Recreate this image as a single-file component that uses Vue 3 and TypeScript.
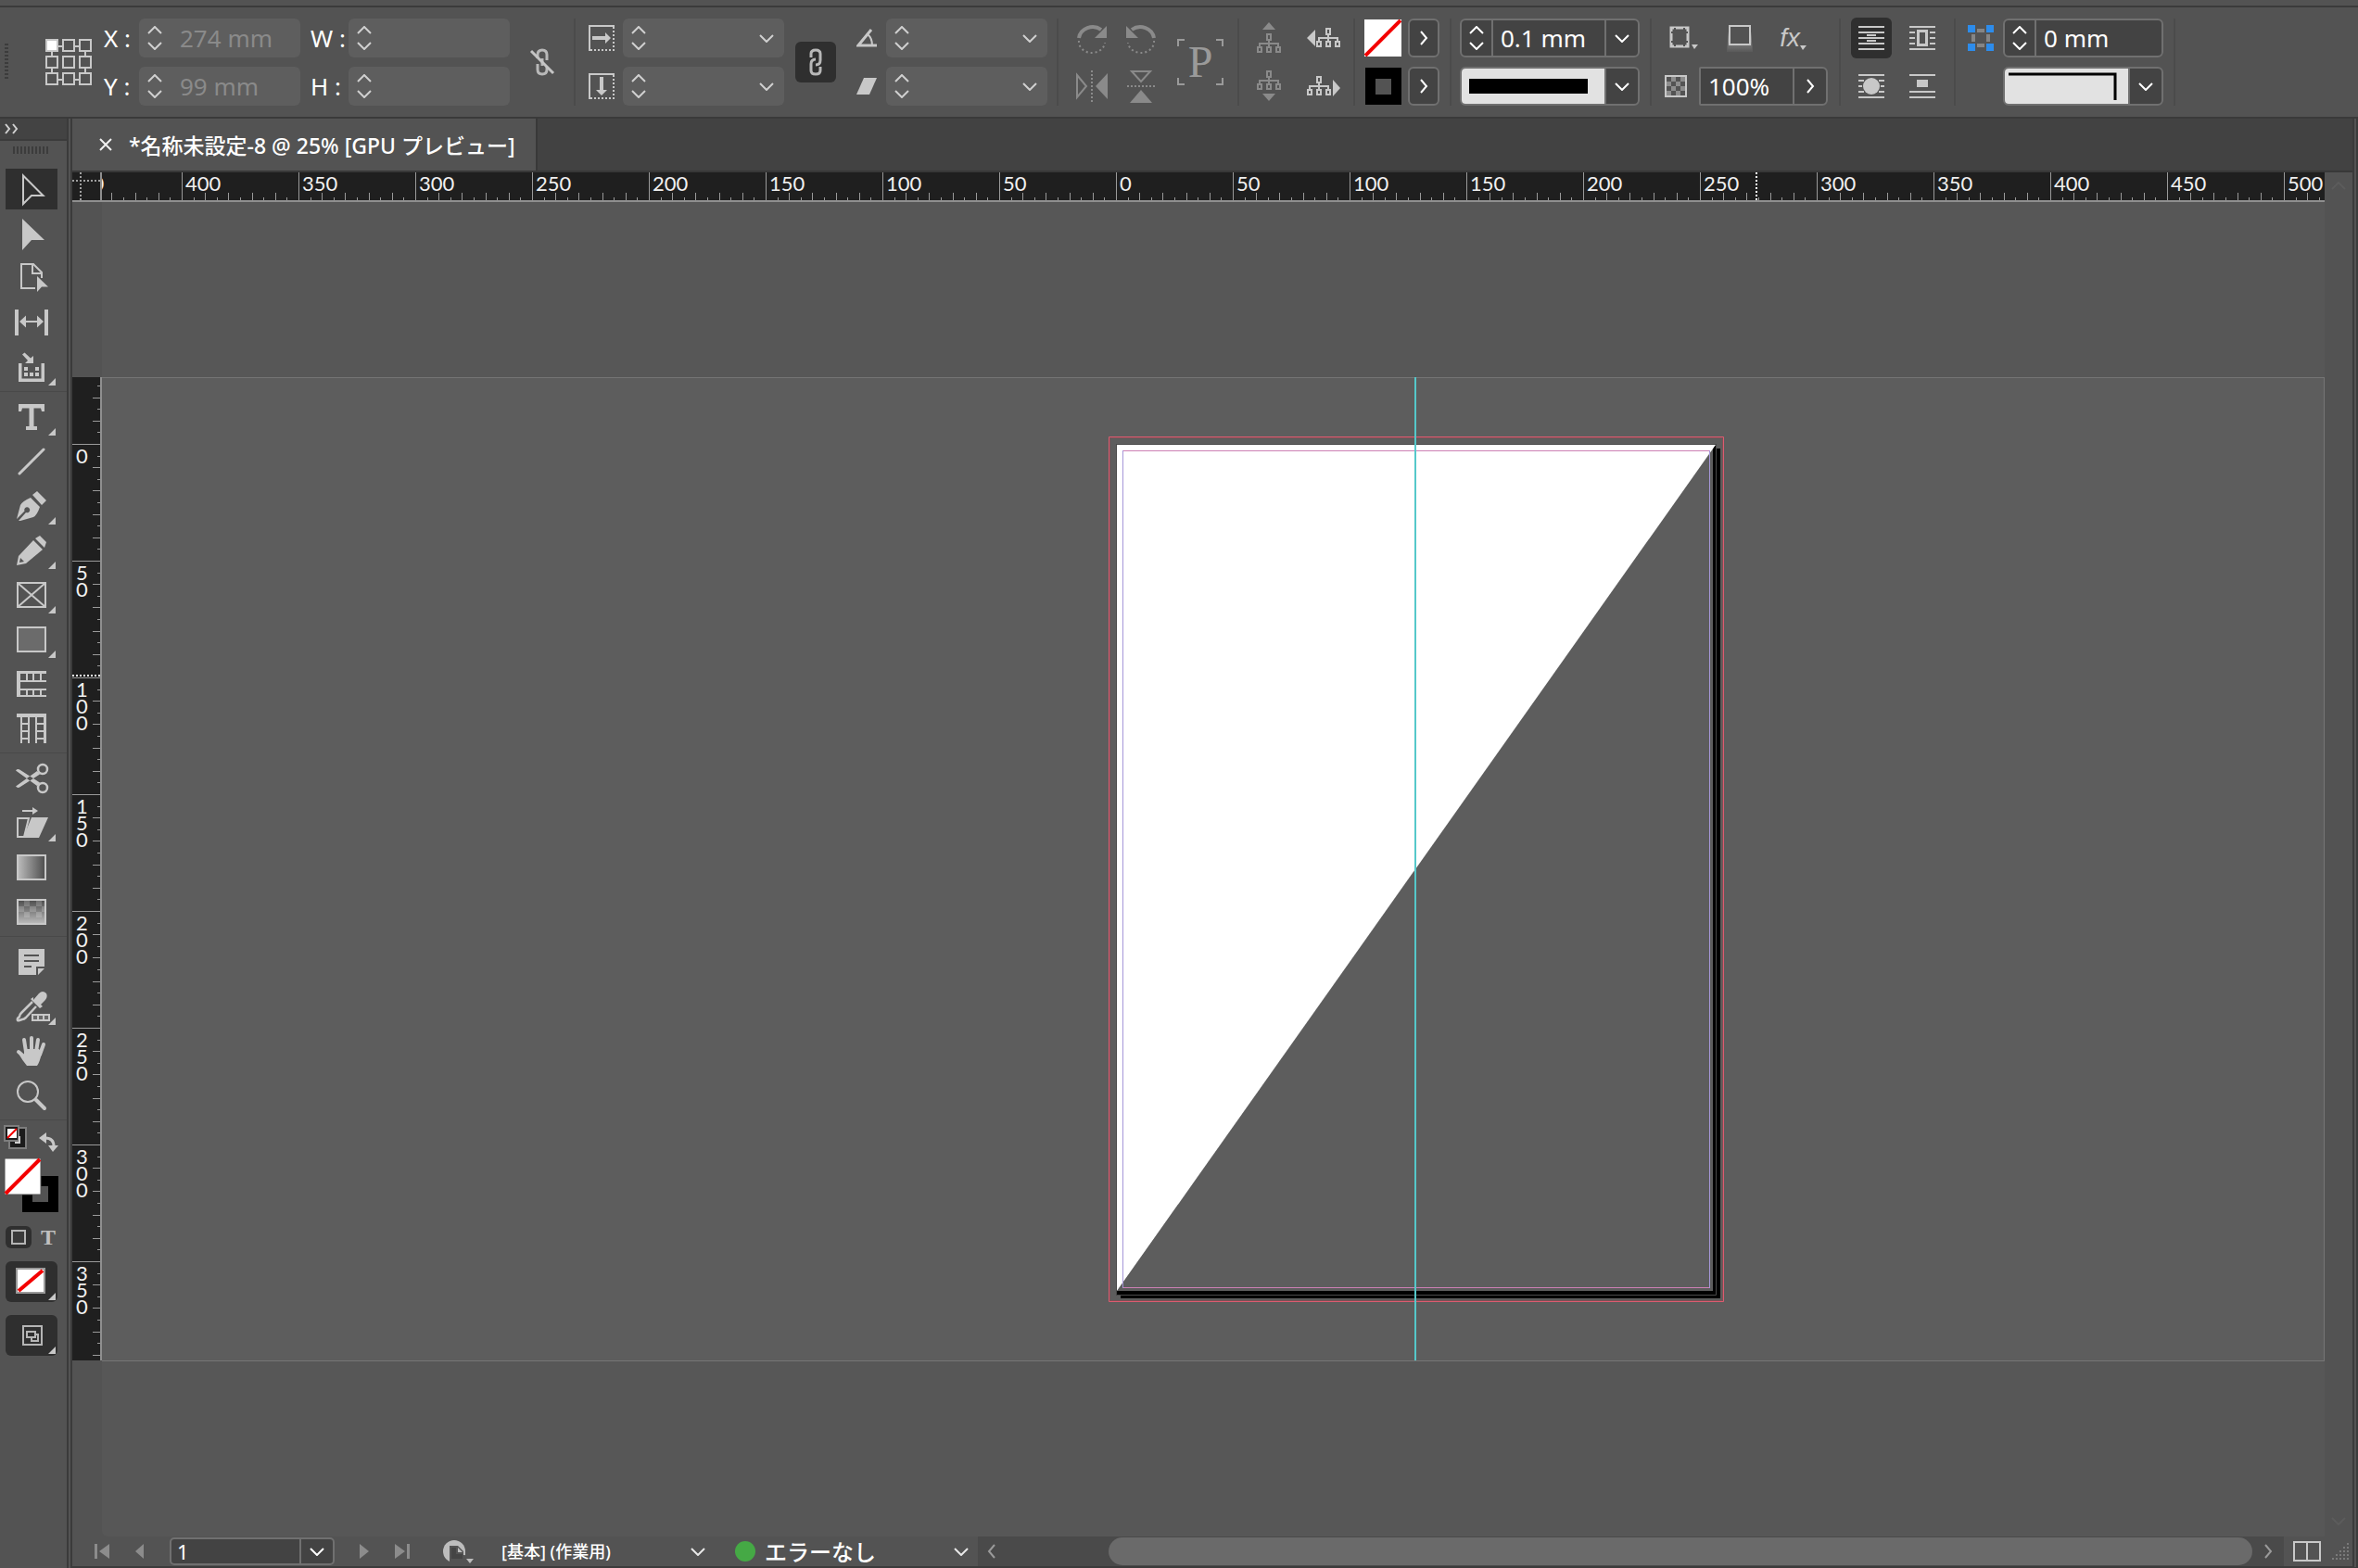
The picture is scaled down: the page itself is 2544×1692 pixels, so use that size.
<script setup lang="ts">
import { ref } from 'vue'

interface Tool {
  name: string
  icon: string
  more?: boolean
  active?: boolean
}

const x = ref('274 mm')
const y = ref('99 mm')
const w = ref('')
const h = ref('')
const strokeWeight = ref('0.1 mm')
const opacity = ref('100%')
const cornerSize = ref('0 mm')
const page = ref('1')

const toolGroups: Tool[][] = [
  [
    { name: '選択ツール', active: true, icon: '<path d="M25 9.500L46.500 31H34L25 40Z" fill="none" stroke="#c8c8c8" stroke-width="2"/>' },
    { name: 'ダイレクト選択ツール', icon: '<path d="M24 8L48 31H34L24 42Z"/>' },
    { name: 'ページツール', icon: '<path d="M38 35H23V9H36L45 18V24M35 9V19H45" fill="none" stroke="#c8c8c8" stroke-width="2"/><path d="M40 22L52 33.500H45L40 39Z"/>' },
    { name: '間隔ツール', icon: '<path d="M16 10H20V38H16ZM48 10H52V38H48ZM21 23L28 16.500V22H40V16.500L47 23L40 29.500V24H28V29.500Z"/>' },
    { name: 'コンテンツ収集ツール', more: true, icon: '<path d="M20 20H23.500V36.500H44.500V20H48V40H20ZM26 24H30V28H26ZM38 24H42V28H38ZM26 30H30V34H26ZM32 30H36V34H32ZM38 30H42V34H38ZM24 10.500L26.500 8.500L33 14.500L36 12V20H27L30 17Z"/>' }
  ],
  [
    { name: '横組み文字ツール', more: true, icon: '<path d="M20 10H48V18H45L44 14.500H36.500V34H40V38H28V34H31.500V14.500H24L23 18H20Z"/>' },
    { name: '線ツール', icon: '<path d="M21 37L47 11" stroke="#c8c8c8" stroke-width="3" stroke-linecap="round"/>' },
    { name: 'ペンツール', more: true, icon: '<path d="M18 38L22 23Q24 19 33 15L43 25Q40 34 36 36L22 40H20L28 31A3 3 0 1 0 26.500 29.500L18 38ZM35 12L40 8L50 18L45 23Z"/>' },
    { name: '鉛筆ツール', more: true, icon: '<path d="M18 40L20 30L36 13L46 23L28 38ZM38 11L43 8L50 15L48 21Z"/><path d="M21 37L22 32L26 36Z" fill="#535353"/>' },
    { name: '長方形フレームツール', more: true, icon: '<path d="M19 11H49V37H19ZL49 37M49 11L19 37" fill="none" stroke="#c8c8c8" stroke-width="2"/>' },
    { name: '長方形ツール', more: true, icon: '<path d="M19 11H49V37H19Z" fill="#6b6b6b" stroke="#c8c8c8" stroke-width="2"/>' },
    { name: '横組みグリッドツール', icon: '<path d="M18 10H50V13H22V20H50V22H22V29H50V31H22V36H50V38H18ZM28 12H30V21H28ZM35 12H37V21H35ZM43 12H45V21H43ZM28 30H30V37H28ZM35 30H37V37H35ZM43 30H45V37H43Z"/>' },
    { name: '縦組みグリッドツール', icon: '<path d="M18 8H50V40H47V12H40V40H38V12H32V40H30V12H24V40H22V12H18ZM23 18H31V20H23ZM23 26H31V28H23ZM23 34H31V36H23ZM39 18H48V20H39ZM39 26H48V28H39ZM39 34H48V36H39Z"/>' }
  ],
  [
    { name: 'はさみツール', icon: '<g fill="none" stroke="#c8c8c8" stroke-width="2.500"><circle cx="46" cy="14" r="5"/><circle cx="46" cy="34" r="5"/></g><path d="M17 15.500Q19 13 22 15L43 28.500L40 32ZM17 32.500Q19 35 22 33L43 19.500L40 16Z"/>' },
    { name: '自由変形ツール', more: true, icon: '<path d="M24 10H35V7L41 11L35 15V12H24Z"/><path d="M19 19H31L26 39H19Z" fill="none" stroke="#c8c8c8" stroke-width="2"/><path d="M34 18H52L42 40H25Z"/>' },
    { name: 'グラデーションスウォッチツール', icon: '<path d="M19 11H49V37H19Z" fill="url(#grad-h)" stroke="#c8c8c8" stroke-width="2"/>' },
    { name: 'グラデーションぼかしツール', icon: '<path d="M19 11H49V37H19Z" fill="url(#grad-v)" stroke="#c8c8c8" stroke-width="2"/><path d="M26 12H32V18H26ZM39 12H45V18H39ZM20 18H26V24H20ZM32 18H39V24H32ZM45 18H48V24H45ZM26 24H32V30H26ZM39 24H45V30H39Z" fill="#ffffff" fill-opacity=".18"/>' }
  ],
  [
    { name: '注釈ツール', icon: '<path d="M20 10H48V29H39V38H20ZM41 38V31H48Z"/><path d="M26 17H42M26 23H42M26 29H34" stroke="#535353" stroke-width="2"/>' },
    { name: 'カラーテーマツール', more: true, icon: '<path d="M36 17L42 10Q46 6 50 10Q52 14 48 18L44 22L46 24L43 26L33 16L36 14Z"/><path d="M35 19L23 31Q21 33 21 35L19 37Q18 40 21 39L24 38Q26 38 28 36L39 24" fill="none" stroke="#c8c8c8" stroke-width="2.500"/><path d="M35 33H53V39H35Z" fill="#6a6a6a" stroke="#c8c8c8" stroke-width="2"/><path d="M40 33H42V39H40ZM46 33H48V39H46Z"/>' },
    { name: '手のひらツール', icon: '<g fill="none" stroke="#c8c8c8" stroke-width="4" stroke-linecap="round"><path d="M28 25L26 12M34 24V10M39 25L41 12M43 28L47 17M27 31L20 25"/></g><path d="M26 22H42L45 26Q43 36 40 40H29Q24 34 20 27L26 28Z"/>' },
    { name: 'ズームツール', icon: '<circle cx="30" cy="20" r="11" fill="none" stroke="#c8c8c8" stroke-width="2"/><path d="M39 29L48 38" stroke="#c8c8c8" stroke-width="4" stroke-linecap="round"/>' }
  ]
]

const PITCH = 126
interface Tick { pos: number; size: number; label: string }

function makeTicks(origin: number, from: number, to: number): Tick[] {
  const ticks: Tick[] = []
  for (let v = from; v <= to; v += 5) {
    const major = v % 50 === 0
    ticks.push({
      pos: Math.round(origin + (v * PITCH) / 50),
      size: major ? 30 : v % 10 === 0 ? 8 : 3,
      label: major ? String(Math.abs(v)) : ''
    })
  }
  return ticks
}

const hTicks = makeTicks(1095, -450, 560)
const vTicks = makeTicks(72, -25, 390)
</script>

<template>
  <div class="app">
    <svg class="defs" width="0" height="0" aria-hidden="true">
      <defs>
        <linearGradient id="grad-h"><stop offset="0" stop-color="#bdbdbd" /><stop offset="1" stop-color="#4c4c4c" /></linearGradient>
        <linearGradient id="grad-v" x2="0" y2="1"><stop offset="0" stop-color="#4c4c4c" /><stop offset="1" stop-color="#bdbdbd" /></linearGradient>
        <linearGradient id="grad-drop" x2="0" y2="1"><stop offset="0" stop-color="#c8c8c8" /><stop offset="1" stop-color="#5c5c5c" /></linearGradient>
      </defs>
      <symbol id="up" viewBox="0 0 16 9"><path d="M1 8L8 1L15 8" fill="none" stroke="currentColor" stroke-width="2" /></symbol>
      <symbol id="down" viewBox="0 0 16 9"><path d="M1 1L8 8L15 1" fill="none" stroke="currentColor" stroke-width="2" /></symbol>
      <symbol id="right" viewBox="0 0 9 16"><path d="M1 1L7 8L1 15" fill="none" stroke="currentColor" stroke-width="2" /></symbol>
      <symbol id="left" viewBox="0 0 9 16"><path d="M8 1L2 8L8 15" fill="none" stroke="currentColor" stroke-width="2" /></symbol>
      <symbol id="tree" viewBox="0 0 26 21">
        <path d="M11 1H15V7H11ZM1 15H5V20H1ZM11 15H15V20H11ZM21 15H25V20H21ZM13 7V15M3 15V11H23V15" fill="none" stroke="currentColor" stroke-width="2" />
      </symbol>
    </svg>

    <div class="top-strip"></div>

    <header class="control-bar">
      <section class="group transform">
        <span class="grip"></span>
        <svg class="span-rows" width="50" height="50" viewBox="0 0 50 50">
          <path d="M14 8H36M14 44H36M7 14V36M43 14V36" stroke="#c8c8c8" stroke-width="2" />
          <g fill="#535353" stroke="#c8c8c8" stroke-width="2">
            <rect v-for="i in 9" :key="i" :x="1 + ((i - 1) % 3) * 18" :y="1 + Math.floor((i - 1) / 3) * 18" width="12" height="12" />
          </g>
          <path d="M2 2H12V12H2Z" fill="#fff" />
        </svg>
        <label for="pos-x">X :</label>
        <div class="field"><span class="spin"><button aria-label="X を増やす"><svg><use href="#up" /></svg></button><button aria-label="X を減らす"><svg><use href="#down" /></svg></button></span><input id="pos-x" v-model="x" disabled /></div>
        <label for="size-w" class="second">W :</label>
        <div class="field"><span class="spin"><button aria-label="W を増やす"><svg><use href="#up" /></svg></button><button aria-label="W を減らす"><svg><use href="#down" /></svg></button></span><input id="size-w" v-model="w" disabled /></div>
        <button class="plain span-rows" aria-label="縦横の比率を固定">
          <svg width="28" height="30" viewBox="0 0 28 30"><path d="M9 11V7Q9 2 14 2Q19 2 19 7V13M9 17V23Q9 28 14 28Q19 28 19 23V20M14 11V19" fill="none" stroke="#b8b8b8" stroke-width="3" /><path d="M2 3L26 27" stroke="#c4c4c4" stroke-width="3" /></svg>
        </button>
        <label for="pos-y">Y :</label>
        <div class="field"><span class="spin"><button aria-label="Y を増やす"><svg><use href="#up" /></svg></button><button aria-label="Y を減らす"><svg><use href="#down" /></svg></button></span><input id="pos-y" v-model="y" disabled /></div>
        <label for="size-h" class="second">H :</label>
        <div class="field"><span class="spin"><button aria-label="H を増やす"><svg><use href="#up" /></svg></button><button aria-label="H を減らす"><svg><use href="#down" /></svg></button></span><input id="size-h" v-model="h" disabled /></div>
      </section>

      <section class="group scale">
        <svg class="scale-icon" width="28" height="28" viewBox="0 0 28 28"><path d="M28 1H1V28" fill="none" stroke="#c8c8c8" stroke-width="2" /><path d="M27 2V28M2 27H28" stroke="#c8c8c8" stroke-width="2" stroke-dasharray="2 2" /><path d="M4 12H18V8L24 14L18 20V16H4Z" fill="#c8c8c8" /></svg>
        <div class="field"><span class="spin"><button aria-label="拡大"><svg><use href="#up" /></svg></button><button aria-label="縮小"><svg><use href="#down" /></svg></button></span><input aria-label="拡大/縮小 X" disabled /><button class="drop" aria-label="X パーセントの候補"><svg><use href="#down" /></svg></button></div>
        <button class="chain span-rows" aria-label="拡大/縮小の比率を固定">
          <svg width="14" height="30" viewBox="0 0 14 30"><path d="M2 10V6Q2 2 7 2Q12 2 12 6V13Q12 18 7 18M12 20V24Q12 28 7 28Q2 28 2 24V17Q2 12 7 12" fill="none" stroke="#b8b8b8" stroke-width="3" /></svg>
        </button>
        <svg class="center" width="22" height="20" viewBox="0 0 22 20"><path d="M16 1L2 18H22" fill="none" stroke="#c8c8c8" stroke-width="3" /><path d="M12 6Q17 10 17 18" fill="none" stroke="#c8c8c8" stroke-width="2" /></svg>
        <div class="field"><span class="spin"><button aria-label="角度を増やす"><svg><use href="#up" /></svg></button><button aria-label="角度を減らす"><svg><use href="#down" /></svg></button></span><input aria-label="回転角度" disabled /><button class="drop" aria-label="回転角度の候補"><svg><use href="#down" /></svg></button></div>
        <svg class="scale-icon" width="28" height="28" viewBox="0 0 28 28"><path d="M28 1H1V28" fill="none" stroke="#c8c8c8" stroke-width="2" /><path d="M27 2V28M2 27H28" stroke="#c8c8c8" stroke-width="2" stroke-dasharray="2 2" /><path d="M12 4V18H8L14 24L20 18H16V4Z" fill="#c8c8c8" /></svg>
        <div class="field"><span class="spin"><button aria-label="拡大"><svg><use href="#up" /></svg></button><button aria-label="縮小"><svg><use href="#down" /></svg></button></span><input aria-label="拡大/縮小 Y" disabled /><button class="drop" aria-label="Y パーセントの候補"><svg><use href="#down" /></svg></button></div>
        <svg class="center" width="22" height="20" viewBox="0 0 22 20"><path d="M8 1H22L14 19H0Z" fill="#c8c8c8" /></svg>
        <div class="field"><span class="spin"><button aria-label="傾斜を増やす"><svg><use href="#up" /></svg></button><button aria-label="傾斜を減らす"><svg><use href="#down" /></svg></button></span><input aria-label="傾斜角度" disabled /><button class="drop" aria-label="傾斜角度の候補"><svg><use href="#down" /></svg></button></div>
      </section>

      <section class="group rotate">
        <button class="plain" aria-label="90度回転（時計回り）"><svg width="34" height="34" viewBox="0 0 34 34"><path d="M3 17A15 14 0 0 1 27 8" fill="none" stroke="#8a8a8a" stroke-width="4" /><path d="M33 4V17H20Z" fill="#8a8a8a" /><path d="M3 20A14 12 0 0 0 31 22" fill="none" stroke="#8a8a8a" stroke-width="2" stroke-dasharray="2 3" /></svg></button>
        <button class="plain" aria-label="90度回転（反時計回り）"><svg width="34" height="34" viewBox="0 0 34 34"><path d="M31 17A15 14 0 0 0 7 8" fill="none" stroke="#8a8a8a" stroke-width="4" /><path d="M1 4V17H14Z" fill="#8a8a8a" /><path d="M31 20A14 12 0 0 1 3 22" fill="none" stroke="#8a8a8a" stroke-width="2" stroke-dasharray="2 3" /></svg></button>
        <div class="flip-state span-rows"><span>P</span><svg width="50" height="50" viewBox="0 0 50 50"><path d="M1 8V1H8M42 1H49V8M49 42V49H42M8 49H1V42" fill="none" stroke="#9a9a9a" stroke-width="2" /></svg></div>
        <button class="plain" aria-label="水平方向に反転"><svg width="34" height="36" viewBox="0 0 34 36"><path d="M1 6L11 18L1 30Z" fill="none" stroke="#8a8a8a" stroke-width="2" /><path d="M34 4V32L21 18Z" fill="#8a8a8a" /><path d="M17 1V36" stroke="#8a8a8a" stroke-width="2" stroke-dasharray="2 2" /></svg></button>
        <button class="plain" aria-label="垂直方向に反転"><svg width="32" height="36" viewBox="0 0 32 36"><path d="M6 2H26L16 13Z" fill="none" stroke="#8a8a8a" stroke-width="2" /><path d="M4 36H28L16 22Z" fill="#8a8a8a" /><path d="M1 18H31" stroke="#8a8a8a" stroke-width="2" stroke-dasharray="2 2" /></svg></button>
      </section>

      <section class="group hierarchy">
        <button class="plain dim" aria-label="コンテナを選択"><svg width="26" height="34" viewBox="0 0 26 34"><path d="M6 8L13 0L20 8Z" fill="currentColor" /><use href="#tree" y="12" width="26" height="21" /></svg></button>
        <button class="plain" aria-label="前のオブジェクトを選択"><svg width="36" height="22" viewBox="0 0 36 22"><path d="M9 2V20L0 11Z" fill="currentColor" /><use href="#tree" x="10" width="26" height="21" /></svg></button>
        <button class="plain dim" aria-label="コンテンツを選択"><svg width="26" height="34" viewBox="0 0 26 34"><use href="#tree" width="26" height="21" /><path d="M6 25L13 33L20 25Z" fill="currentColor" /></svg></button>
        <button class="plain" aria-label="次のオブジェクトを選択"><svg width="36" height="22" viewBox="0 0 36 22"><use href="#tree" width="26" height="21" /><path d="M28 4V22L36 13Z" fill="currentColor" /></svg></button>
      </section>

      <section class="group paint">
        <svg width="40" height="40" viewBox="0 0 40 40"><path d="M0 0H40V40H0Z" fill="#fff" /><path d="M1 39L39 1" stroke="#f30000" stroke-width="4" /></svg>
        <button class="box" aria-label="塗り"><svg class="side"><use href="#right" /></svg></button>
        <svg width="40" height="40" viewBox="0 0 40 40"><path d="M1 0H40V40H1Z" fill="#000" /><path d="M12 12H29V29H12Z" fill="#535353" /></svg>
        <button class="box" aria-label="線"><svg class="side"><use href="#right" /></svg></button>
      </section>

      <section class="group stroke">
        <div class="field live"><span class="spin"><button aria-label="線幅を増やす"><svg><use href="#up" /></svg></button><button aria-label="線幅を減らす"><svg><use href="#down" /></svg></button></span><input v-model="strokeWeight" aria-label="線幅" /><button class="drop" aria-label="線幅の候補"><svg><use href="#down" /></svg></button></div>
        <button class="field live picker" aria-label="線の種類"><span class="sample"><i></i></span><span class="drop"><svg><use href="#down" /></svg></span></button>
      </section>

      <section class="group effects">
        <div class="row icons">
          <button class="plain" aria-label="オブジェクト"><svg width="32" height="26" viewBox="0 0 32 26"><path d="M2 2H20V22H2Z" fill="none" stroke="#c8c8c8" stroke-width="3" /><path d="M6 2V5M16 2V5M6 19V22M16 19V22M2 7H5M17 7H20M2 17H5M17 17H20" stroke="#535353" stroke-width="2" /><path d="M24 20H31L27 25Z" fill="#c8c8c8" /></svg></button>
          <button class="plain" aria-label="ドロップシャドウ"><svg width="28" height="30" viewBox="0 0 28 30"><path d="M2 8L0 30H28L26 8Z" fill="url(#grad-drop)" fill-opacity=".7" /><path d="M3 2H25V22H3Z" fill="#535353" stroke="#c8c8c8" stroke-width="2" /></svg></button>
          <button class="plain fx" aria-label="効果"><i>fx</i><svg width="7" height="5" viewBox="0 0 7 5"><path d="M0 0H7L3 5Z" fill="#c8c8c8" /></svg></button>
        </div>
        <div class="row">
          <svg width="24" height="24" viewBox="0 0 24 24"><path d="M1 1H23V23H1Z" fill="none" stroke="#c8c8c8" stroke-width="2" /><path d="M7 2H12V7H7ZM17 2H22V7H17ZM2 7H7V12H2ZM12 7H17V12H12ZM7 12H12V17H7ZM17 12H22V17H17ZM2 17H7V22H2ZM12 17H17V22H12Z" fill="#8d8d8d" /></svg>
          <div class="field live opacity"><input v-model="opacity" aria-label="不透明度" /><button class="drop" aria-label="不透明度のスライダー"><svg class="side"><use href="#right" /></svg></button></div>
        </div>
      </section>

      <section class="group wrap">
        <button class="plain on" aria-label="回り込みなし"><svg width="28" height="28" viewBox="0 0 28 28"><path d="M0 2H28M0 8H9M19 8H28M0 14H7M21 14H28M0 20H9M19 20H28M0 26H28M9 8H19M9 20H19" stroke="#c8c8c8" stroke-width="2" /><path d="M9 10H19V12H9ZM7 13H21V15H7ZM9 16H19V18H9Z" fill="#c8c8c8" /></svg></button>
        <button class="plain" aria-label="境界線ボックスで回り込む"><svg width="28" height="28" viewBox="0 0 28 28"><path d="M0 2H28M0 8H6M22 8H28M0 14H6M22 14H28M0 20H6M22 20H28M0 26H28" stroke="#c8c8c8" stroke-width="2" /><path d="M9.500 6.500H18.500V21.500H9.500Z" fill="none" stroke="#c8c8c8" stroke-width="3" /></svg></button>
        <button class="plain" aria-label="オブジェクトのシェイプで回り込む"><svg width="28" height="28" viewBox="0 0 28 28"><path d="M0 2H28M0 8H6M22 8H28M0 14H4M24 14H28M0 20H6M22 20H28M0 26H28" stroke="#c8c8c8" stroke-width="2" /><circle cx="14" cy="14" r="9" fill="#c8c8c8" /></svg></button>
        <button class="plain" aria-label="オブジェクトを挟んで回り込む"><svg width="28" height="28" viewBox="0 0 28 28"><path d="M0 2H28M0 20H28M0 26H28" stroke="#c8c8c8" stroke-width="2" /><path d="M8 7H20V15H8Z" fill="#c8c8c8" /></svg></button>
      </section>

      <section class="group corner">
        <svg width="28" height="28" viewBox="0 0 28 28"><path d="M0 0H8V8H0ZM20 0H28V8H20ZM0 20H8V28H0ZM20 20H28V28H20Z" fill="#2d8ceb" /><path d="M10 4H18V8H10ZM10 20H18V24H10ZM4 10H8V18H4ZM20 10H24V18H20Z" fill="#858585" /></svg>
        <div class="field live"><span class="spin"><button aria-label="コーナーを大きく"><svg><use href="#up" /></svg></button><button aria-label="コーナーを小さく"><svg><use href="#down" /></svg></button></span><input v-model="cornerSize" aria-label="コーナーサイズ" /></div>
        <span></span>
        <button class="field live picker" aria-label="コーナーの形状"><span class="sample"><svg width="128" height="38" viewBox="0 0 128 38"><path d="M4 6H119V34" fill="none" stroke="#000" stroke-width="3" /></svg></span><span class="drop"><svg><use href="#down" /></svg></span></button>
      </section>
    </header>

    <div class="workspace">
      <aside class="toolbox">
        <button class="expand" aria-label="パネルを展開"><svg width="16" height="12" viewBox="0 0 16 12"><path d="M1 1L5 6L1 11M9 1L13 6L9 11" fill="none" stroke="#d0d0d0" stroke-width="2" /></svg></button>
        <div class="handle"></div>
        <div v-for="(group, g) in toolGroups" :key="g" class="tool-group">
          <button v-for="tool in group" :key="tool.name" class="tool" :class="{ active: tool.active }" :aria-label="tool.name">
            <svg width="72" height="48" viewBox="0 0 72 48" fill="#c8c8c8">
              <g v-html="tool.icon"></g>
              <path v-if="tool.more" d="M60 36V44H52Z" />
            </svg>
          </button>
        </div>
        <div class="tool-group colors">
          <svg width="72" height="106" viewBox="0 0 72 106">
            <path d="M10 8H28V30H10Z" fill="#1c1c1c" stroke="#7d7d7d" stroke-width="2" />
            <path d="M5 6H20V22H5Z" fill="#1c1c1c" stroke="#7d7d7d" stroke-width="2" />
            <path d="M8 9H18V19H8Z" fill="#fff" /><path d="M8 19L18 9" stroke="#f30000" stroke-width="2" />
            <path d="M16 24H21V17" fill="none" stroke="#d0d0d0" stroke-width="2" />
            <path d="M49 19Q58 19 58 28" fill="none" stroke="#c8c8c8" stroke-width="3" /><path d="M42 19L50 13V25ZM52 27H63L57 34Z" fill="#c8c8c8" />
            <path d="M24 60H63V99H24ZM35 71V88H52V71Z" fill="#000" fill-rule="evenodd" />
            <path d="M5 41H44V80H5Z" fill="#fff" stroke="#535353" /><path d="M6 79L43 42" stroke="#f30000" stroke-width="4" />
          </svg>
          <div class="targets">
            <button class="on" aria-label="オブジェクトに適用"><svg width="16" height="16" viewBox="0 0 16 16"><path d="M1 1H15V15H1Z" fill="#3a3a3a" stroke="#b5b5b5" stroke-width="2" /></svg></button>
            <button aria-label="テキストに適用">T</button>
          </div>
          <button class="mode" aria-label="適用なし"><svg width="56" height="44" viewBox="0 0 56 44"><path d="M12 8H42V34H12Z" fill="#fff" stroke="#9a9a9a" stroke-width="2" /><path d="M14 32L40 10" stroke="#f30000" stroke-width="4" /><path d="M54 34V42H46Z" fill="#c8c8c8" /></svg></button>
          <button class="mode" aria-label="標準モード"><svg width="56" height="44" viewBox="0 0 56 44"><path d="M19 12H39V32H19Z" fill="none" stroke="#b5b5b5" stroke-width="2" /><path d="M23 18H32V24H23ZM32 21H35V28H28V24" fill="none" stroke="#b5b5b5" stroke-width="2" /><path d="M54 34V42H46Z" fill="#c8c8c8" /></svg></button>
        </div>
      </aside>

      <main class="document">
        <nav class="tabs">
          <div class="tab">
            <button aria-label="閉じる"><svg width="14" height="14" viewBox="0 0 14 14"><path d="M1 1L13 13M13 1L1 13" stroke="#f0f0f0" stroke-width="2" /></svg></button>
            <span>*名称未設定-8 @ 25% [GPU プレビュー]</span>
          </div>
        </nav>
        <div class="body">
          <div class="view">
            <div class="h-ruler">
              <svg class="origin" width="30" height="30" viewBox="0 0 30 30"><path d="M0 9H30M9 0V30" stroke="#a0a0a0" stroke-width="2" stroke-dasharray="2 2" /></svg>
              <svg class="scale-h" height="30">
                <g v-for="t in hTicks" :key="t.pos">
                  <rect :x="t.pos - 1" :y="30 - t.size" width="1" :height="t.size" fill="#9a9a9a" />
                  <text v-if="t.label" :x="t.pos + 3" y="20">{{ t.label }}</text>
                </g>
                <path d="M1785 0V30" stroke="#fff" stroke-width="2" stroke-dasharray="2 2" />
              </svg>
            </div>
            <div class="stage">
              <div class="v-ruler">
                <svg width="30" height="1061" viewBox="0 0 30 1061">
                  <g v-for="t in vTicks" :key="t.pos">
                    <rect :x="30 - t.size" :y="t.pos" :width="t.size" height="1" fill="#9a9a9a" />
                    <text v-for="(d, i) in t.label" :key="i" x="4" :y="t.pos + 21 + i * 18">{{ d }}</text>
                  </g>
                  <path d="M0 322H30" stroke="#fff" stroke-width="2" stroke-dasharray="2 2" />
                </svg>
              </div>
              <div class="canvas">
                <div class="spread"></div>
                <svg class="artboard" width="665" height="935" viewBox="0 0 665 935">
                  <path d="M13 13H660V930H13Z" fill="#000" />
                  <path d="M8.500 8.500H655.500V926.500H8.500Z" fill="#000" stroke="#4a4a4a" />
                  <path d="M9 922L652 12V922Z" fill="#5d5d5d" />
                  <path d="M9 9H655L9 922Z" fill="#fff" />
                  <path d="M15 15.500H649M15 918.500H649" stroke="#cc80b4" />
                  <path d="M15.500 15V919M648.500 15V919" stroke="#a596d8" />
                  <path d="M1.500 1.500H662.500V932.500H1.500Z" fill="none" stroke="#7d4f55" />
                  <path d="M.5.5H663.500V933.500H.5Z" fill="none" stroke="#dc5c70" />
                </svg>
                <div class="guide"></div>
              </div>
            </div>
          </div>
          <div class="v-scroll">
            <svg width="16" height="9"><use href="#up" /></svg>
            <svg width="16" height="9"><use href="#down" /></svg>
          </div>
        </div>
        <footer class="status">
          <button class="nav first" aria-label="先頭ページ"><svg width="16" height="16" viewBox="0 0 16 16"><path d="M0 0H3V16H0ZM16 0V16L5 8Z" /></svg></button>
          <button class="nav prev" aria-label="前ページ"><svg width="9" height="16" viewBox="0 0 9 16"><path d="M9 0V16L0 8Z" /></svg></button>
          <div class="page-box"><input v-model="page" aria-label="ページ番号" /><button aria-label="ページの一覧"><svg width="16" height="9"><use href="#down" /></svg></button></div>
          <button class="nav next" aria-label="次ページ"><svg width="10" height="16" viewBox="0 0 10 16"><path d="M0 0V16L10 8Z" /></svg></button>
          <button class="nav last" aria-label="最終ページ"><svg width="16" height="16" viewBox="0 0 16 16"><path d="M0 0V16L11 8ZM13 0H16V16H13Z" /></svg></button>
          <button class="preflight" aria-label="ドキュメントの状態"><svg width="36" height="28" viewBox="0 0 36 28"><circle cx="14" cy="14" r="12" fill="#bdbdbd" /><path d="M9 8H18L25 15V28H9Z" fill="#535353" /><path d="M11 10H16V17H23V22H11Z" fill="#444" /><path d="M18 10V15H23Z" fill="#bdbdbd" /><path d="M25 14V18" stroke="#bdbdbd" stroke-width="2" /><path d="M27 22H35L31 27Z" fill="#bdbdbd" /></svg></button>
          <div class="choice profile"><select aria-label="プリフライトプロファイル"><option>[基本] (作業用)</option></select><svg width="16" height="9"><use href="#down" /></svg></div>
          <div class="choice errors"><i class="dot"></i><select aria-label="プリフライトの結果"><option>エラーなし</option></select><svg width="16" height="9"><use href="#down" /></svg></div>
          <div class="h-scroll">
            <button aria-label="左へ"><svg width="9" height="16"><use href="#left" /></svg></button>
            <div class="track"><div class="thumb"></div></div>
            <button aria-label="右へ"><svg width="9" height="16"><use href="#right" /></svg></button>
          </div>
          <button class="split" aria-label="レイアウト分割表示"><svg width="30" height="22" viewBox="0 0 30 22"><path d="M1 1H29V21H1ZM15 1V21" fill="none" stroke="#c8c8c8" stroke-width="2" /></svg></button>
          <svg class="resize" width="20" height="20" viewBox="0 0 20 20"><path d="M17 1V20M13 5V20M9 9V20M5 13V20M1 17V20" stroke="#7a7a7a" stroke-width="2" stroke-dasharray="2 2" /></svg>
        </footer>
      </main>
    </div>
  </div>
</template>

<style>
body {
  margin: 0;
  background: #535353;
}
</style>

<style scoped>
.app {
  display: flex;
  flex-direction: column;
  height: 100vh;
  overflow: hidden;
  background: #535353;
  color: #fff;
  font-family: 'Noto Sans', 'Noto Sans CJK JP', sans-serif;
  font-size: 26px;
}
.app * {
  box-sizing: border-box;
}
.defs {
  position: absolute;
}
svg {
  display: block;
  flex: none;
}
button,
input,
select {
  margin: 0;
  padding: 0;
  border: 0;
  background: none;
  color: inherit;
  font: inherit;
}
button {
  display: flex;
  align-items: center;
  justify-content: center;
}
.top-strip {
  flex: none;
  height: 8px;
  border-bottom: 2px solid #3b3b3b;
}

/* control bar */
.control-bar {
  display: flex;
  flex: none;
  height: 120px;
  padding-top: 12px;
  border-bottom: 2px solid #3a3a3a;
}
.group {
  display: grid;
  flex: none;
  grid-template-rows: 42px 42px;
  row-gap: 10px;
  align-items: center;
  height: 94px;
  border-right: 2px solid #4b4b4b;
}
.span-rows {
  grid-row: 1 / 3;
}
.transform {
  grid-template-columns: 44px 63px 38px 174px 52px 174px 69px;
  padding-left: 5px;
}
.transform label {
  white-space: nowrap;
}
.transform .second {
  padding-left: 11px;
}
.transform > .plain {
  grid-column: 7;
}
.transform > svg {
  grid-column: 2;
}
.grip {
  grid-row: 1 / 3;
  width: 4px;
  height: 40px;
  background: repeating-linear-gradient(#3c3c3c 0 2px, transparent 2px 4px);
}
.field {
  display: flex;
  align-items: stretch;
  height: 42px;
  border-radius: 6px;
  background: #5e5e5e;
  color: #d0d0d0;
}
.field input {
  flex: 1;
  min-width: 0;
  padding-left: 8px;
}
.transform .field input {
  padding-left: 10px;
}
.field input:disabled {
  color: #8a8a8a;
}
.spin {
  display: flex;
  flex: none;
  flex-direction: column;
  width: 34px;
  padding: 4px 0 4px;
}
.spin button {
  flex: 1;
}
.spin svg,
.drop svg {
  width: 16px;
  height: 9px;
}
.drop {
  display: flex;
  flex: none;
  align-items: center;
  justify-content: center;
  width: 38px;
}
svg.side {
  width: 9px;
  height: 16px;
}
.live {
  border: 2px solid #707070;
  background: #434343;
  color: #fff;
}
.live .spin {
  width: 34px;
  padding: 2px 0;
  border-right: 2px solid #707070;
}
.live .drop {
  width: 36px;
  border-left: 2px solid #707070;
}
.plain {
  height: 42px;
  color: #c8c8c8;
}
.dim {
  color: #8a8a8a;
}
.scale {
  grid-template-columns: 51px 174px 68px 42px 174px;
  padding-right: 10px;
}
.scale-icon {
  margin-left: 14px;
}
.center {
  justify-self: center;
}
.chain {
  grid-column: 3;
  justify-self: center;
  width: 44px;
  height: 44px;
  border-radius: 6px;
  background: #2f2f2f;
}
.rotate {
  grid-template-columns: 53px 53px 76px;
  padding: 0 2px 0 9px;
}
.flip-state {
  display: grid;
  grid-column: 3;
  place-items: center;
  color: #9a9a9a;
  font-family: 'Liberation Serif', serif;
  font-size: 48px;
  line-height: 50px;
}
.flip-state > * {
  grid-area: 1 / 1;
}
.hierarchy {
  grid-template-columns: 64px 54px;
  padding-right: 5px;
}
.paint {
  grid-template-columns: 40px 34px;
  column-gap: 7px;
  padding: 0 11px 0 10px;
}
.box {
  height: 42px;
  border: 2px solid #707070;
  border-radius: 6px;
  background: #434343;
  color: #fff;
}
.stroke {
  grid-template-columns: 194px;
  padding: 0 11px 0 9px;
}
.picker {
  padding: 0;
  overflow: hidden;
}
.sample {
  display: flex;
  flex: 1;
  align-items: center;
  background: #e2e2e2;
}
.sample i {
  width: 128px;
  height: 16px;
  margin-left: 8px;
  background: #000;
}
.effects {
  width: 204px;
  padding: 0 12px 0 14px;
}
.row {
  display: flex;
  align-items: center;
  justify-content: space-between;
}
.icons {
  padding: 0 23px 0 5px;
}
.fx {
  align-items: flex-end;
  height: 32px;
  font-family: 'Liberation Sans', sans-serif;
  font-size: 28px;
  line-height: 32px;
}
.fx svg {
  margin-bottom: 3px;
}
.opacity {
  width: 139px;
  border-radius: 2px 6px 6px 2px;
}
.wrap {
  grid-template-columns: 44px 44px;
  column-gap: 11px;
  padding: 0 12px 0 11px;
}
.on {
  border-radius: 6px;
  background: #2f2f2f;
}
.wrap .on {
  height: 44px;
}
.corner {
  grid-template-columns: 28px 173px;
  column-gap: 10px;
  padding: 0 11px 0 13px;
}

/* tool column */
.workspace {
  display: flex;
  flex: 1;
  min-height: 0;
}
.toolbox {
  flex: none;
  width: 78px;
  border-right: 6px double #3b3b3b;
}
.expand {
  justify-content: flex-start;
  width: 100%;
  height: 24px;
  padding-left: 5px;
  border-bottom: 2px solid #3b3b3b;
  background: #434343;
}
.handle {
  width: 38px;
  height: 8px;
  margin: 6px 14px 14px;
  background: repeating-linear-gradient(90deg, #3c3c3c 0 2px, transparent 2px 4px);
}
.tool-group + .tool-group {
  margin-top: 2px;
  padding-top: 3px;
  border-top: 1px solid #494949;
}
.tool {
  width: 72px;
  height: 48px;
}
.tool.active {
  background: linear-gradient(#2f2f2f, #2f2f2f) 6px 2px / 56px 44px no-repeat;
}
.tool-group.colors {
  padding-top: 0;
}
.targets {
  display: flex;
  gap: 8px;
  height: 24px;
  margin: 8px 6px 14px;
}
.targets button {
  width: 28px;
  height: 24px;
  color: #c0c0c0;
  font-family: 'Liberation Serif', serif;
  font-size: 24px;
  font-weight: bold;
  line-height: 24px;
}
.targets button + button {
  width: 20px;
}
.mode {
  margin: 0 6px 14px;
  border-radius: 6px;
  background: #2f2f2f;
}

/* document window */
.document {
  display: flex;
  flex: 1;
  flex-direction: column;
  min-width: 0;
  border-right: 6px double #3b3b3b;
  border-bottom: 2px solid #3b3b3b;
}
.tabs {
  display: flex;
  flex: none;
  height: 58px;
  border-bottom: 2px solid #383838;
  background: #424242;
}
.tab {
  display: flex;
  gap: 18px;
  align-items: center;
  padding: 0 22px 0 29px;
  border-right: 2px solid #383838;
  background: #535353;
  font-size: 23px;
  font-weight: 500;
  white-space: nowrap;
}
.body {
  display: flex;
  flex: 1;
  min-height: 0;
}
.view {
  display: flex;
  flex: 1;
  flex-direction: column;
  min-width: 0;
}
.h-ruler {
  display: flex;
  flex: none;
  height: 32px;
  border-bottom: 2px solid #8f8f8f;
  background: #1f1f1f;
}
.origin,
.v-ruler svg {
  border-right: 2px solid #8f8f8f;
  box-sizing: content-box !important;
}
.scale-h {
  flex: 1;
  min-width: 0;
  overflow: visible;
  clip-path: inset(-4px 0 0);
}
text {
  fill: #f0f0f0;
  font-family: Lato, sans-serif;
  font-size: 22px;
}
.stage {
  display: flex;
  flex: 1;
  min-height: 0;
}
.v-ruler {
  flex: none;
  width: 32px;
  padding-top: 189px;
}
.v-ruler svg {
  background: #1f1f1f;
}
.canvas {
  position: relative;
  flex: 1;
  overflow: hidden;
  border-radius: 0 0 0 6px;
  background: #575757;
}
.spread {
  height: 1062px;
  margin-top: 189px;
  border: 1px solid #757575;
  border-left: 0;
  background: #5d5d5d;
}
.artboard {
  position: absolute;
  top: 253px;
  left: 1086px;
}
.guide {
  position: absolute;
  top: 189px;
  left: 1416px;
  width: 2px;
  height: 1061px;
  background: #55c8ca;
}
.v-scroll {
  display: flex;
  flex: none;
  flex-direction: column;
  align-items: center;
  justify-content: space-between;
  width: 30px;
  padding: 10px 0 12px;
  color: #5c5c5c;
}

/* status bar */
.status {
  display: flex;
  flex: none;
  align-items: center;
  height: 32px;
  padding-left: 24px;
}
.nav svg {
  fill: #8c8c8c;
}
.prev {
  margin-left: 28px;
}
.page-box {
  display: flex;
  width: 178px;
  height: 30px;
  margin-left: 28px;
  border: 2px solid #707070;
  border-radius: 5px;
  background: #434343;
  font-size: 22px;
  line-height: 26px;
}
.page-box input {
  flex: 1;
  min-width: 0;
  padding-left: 6px;
}
.page-box button {
  width: 36px;
  border-left: 2px solid #707070;
}
.next {
  margin-left: 27px;
}
.last {
  margin-left: 28px;
}
.preflight {
  margin-left: 34px;
}
.choice {
  display: flex;
  align-items: center;
  font-weight: 500;
}
.choice select {
  flex: 1;
  min-width: 0;
  height: 32px;
  appearance: none;
}
.choice svg {
  color: #e8e8e8;
}
.profile {
  width: 220px;
  margin-left: 29px;
  font-size: 18px;
}
.errors {
  width: 252px;
  margin-left: 32px;
  font-size: 24px;
}
.dot {
  width: 22px;
  height: 22px;
  margin-right: 10px;
  border-radius: 50%;
  background: #45a945;
}
.h-scroll {
  display: flex;
  flex: 1;
  align-items: center;
  height: 32px;
  margin-left: 10px;
  background: #4a4a4a;
  color: #9a9a9a;
}
.h-scroll button {
  width: 34px;
  height: 32px;
}
.h-scroll button:first-child {
  width: 28px;
}
.track {
  flex: 1;
  padding-left: 8%;
}
.thumb {
  height: 30px;
  border-radius: 15px;
  background: #6a6a6a;
}
.split {
  width: 50px;
}
.resize {
  margin: 0 2px;
}
</style>
